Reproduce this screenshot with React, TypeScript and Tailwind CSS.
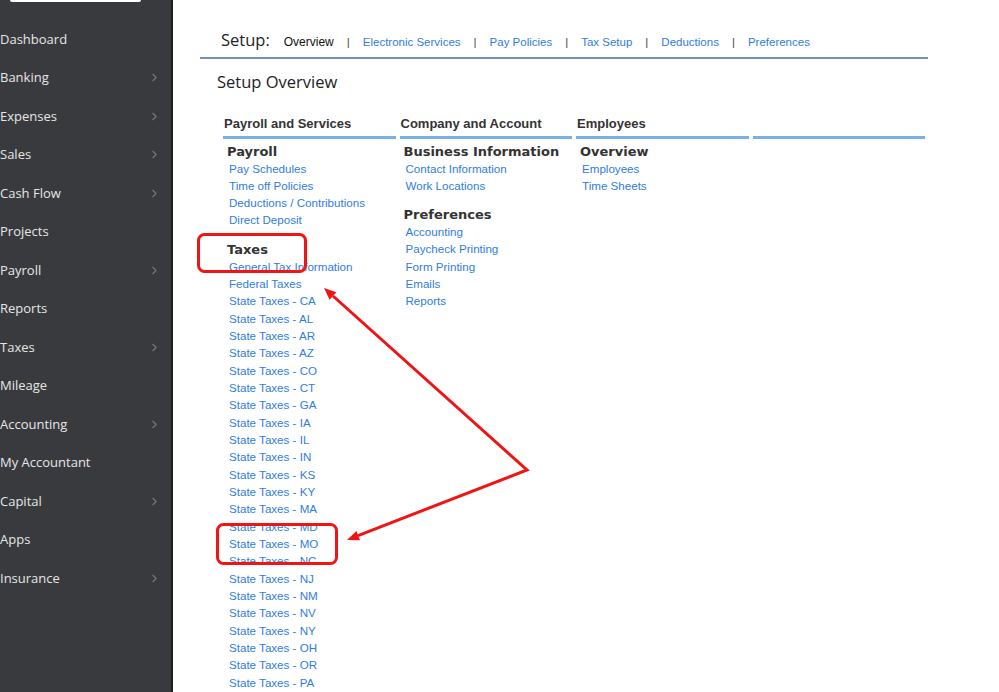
import { ChevronRight } from "lucide-react";

const navItems = [
  { label: "Dashboard", arrow: false },
  { label: "Banking", arrow: true },
  { label: "Expenses", arrow: true },
  { label: "Sales", arrow: true },
  { label: "Cash Flow", arrow: true },
  { label: "Projects", arrow: false },
  { label: "Payroll", arrow: true },
  { label: "Reports", arrow: false },
  { label: "Taxes", arrow: true },
  { label: "Mileage", arrow: false },
  { label: "Accounting", arrow: true },
  { label: "My Accountant", arrow: false },
  { label: "Capital", arrow: true },
  { label: "Apps", arrow: false },
  { label: "Insurance", arrow: true },
];

const tabs = ["Electronic Services", "Pay Policies", "Tax Setup", "Deductions", "Preferences"];

const states = [
  "CA", "AL", "AR", "AZ", "CO", "CT", "GA", "IA", "IL", "IN", "KS", "KY",
  "MA", "MD", "MO", "NC", "NJ", "NM", "NV", "NY", "OH", "OR", "PA",
];

type Group = { title: string; links: string[] };

const columns: { header: string; groups: Group[] }[] = [
  {
    header: "Payroll and Services",
    groups: [
      {
        title: "Payroll",
        links: ["Pay Schedules", "Time off Policies", "Deductions / Contributions", "Direct Deposit"],
      },
      {
        title: "Taxes",
        links: ["General Tax Information", "Federal Taxes", ...states.map((s) => `State Taxes - ${s}`)],
      },
    ],
  },
  {
    header: "Company and Account",
    groups: [
      { title: "Business Information", links: ["Contact Information", "Work Locations"] },
      {
        title: "Preferences",
        links: ["Accounting", "Paycheck Printing", "Form Printing", "Emails", "Reports"],
      },
    ],
  },
  {
    header: "Employees",
    groups: [{ title: "Overview", links: ["Employees", "Time Sheets"] }],
  },
  { header: "", groups: [] },
];

const Sidebar = () => (
  <aside className="w-[173px] shrink-0 h-full bg-[#393a3d] border-r-2 border-[#1e1f21] font-['Open_Sans',sans-serif]">
    <div className="ml-[10px] w-[131px] h-[2px] bg-white rounded-b-[2px]" />
    <ul className="mt-[18px]">
      {navItems.map((item) => (
        <li
          key={item.label}
          className="h-[38.5px] flex items-center justify-between pr-[10px] text-[13px] text-[#e6e6e6]"
        >
          <span>{item.label}</span>
          {item.arrow && <ChevronRight size={13} strokeWidth={2} className="text-[#77787b]" />}
        </li>
      ))}
    </ul>
  </aside>
);

const Annotations = () => (
  <svg className="absolute inset-0 pointer-events-none" width="999" height="692" viewBox="0 0 999 692">
    <g fill="none" stroke="#f01414" strokeWidth="3">
      <rect x="198.5" y="234.5" width="107" height="37" rx="6" />
      <rect x="217.5" y="524.5" width="119" height="39" rx="6" />
      <polyline points="333,296 527,470 358,535.6" strokeLinejoin="miter" />
    </g>
    <g fill="#f01414">
      <polygon points="324,288 336.3,292.3 329.6,299.7" />
      <polygon points="347,540 360,540.3 356.4,530.9" />
    </g>
  </svg>
);

export default function App() {
  return (
    <div className="relative w-[999px] h-[692px] overflow-hidden flex bg-white">
      <Sidebar />
      <main className="flex-1 pl-[27px] pt-[28px]">
        <div className="w-[728px] border-b-2 border-[#7292bb] flex items-baseline pl-[21px] pb-[4px] font-['Liberation_Sans',Arial,sans-serif] text-[11.5px]">
          <span className="font-['Open_Sans',sans-serif] text-[16.5px] text-[#222] mr-[14px]">Setup:</span>
          <span className="text-[12px] text-[#111]">Overview</span>
          {tabs.map((t) => (
            <span key={t} className="flex items-baseline">
              <span className="text-[#444] px-[13px]">|</span>
              <span className="text-[#2f7de1]">{t}</span>
            </span>
          ))}
        </div>

        <h1 className="mt-[11px] ml-[17px] font-['Open_Sans',sans-serif] text-[16.5px] text-[#222]">Setup Overview</h1>

        <div className="mt-[20px] ml-[23px] w-[702px] grid grid-cols-4 gap-x-[4px] items-start">
          {columns.map((col, i) => (
            <div key={i}>
              <div className="h-[17px] pl-[1px] font-['Liberation_Sans',Arial,sans-serif] font-bold text-[13px] leading-[17px] text-[#333]">
                {col.header}
              </div>
              <div className="mt-[4px] h-[3px] bg-[#7ab0e8]" />
              <div className="mt-[4px]">
                {col.groups.map((g, gi) => (
                  <div key={g.title} className={gi > 0 ? "mt-[12px]" : ""}>
                    <div className="pl-[4px] font-['DejaVu_Sans',sans-serif] font-bold text-[13px] leading-[17px] text-[#333]">
                      {g.title}
                    </div>
                    <ul>
                      {g.links.map((l) => (
                        <li
                          key={l}
                          className="pl-[6px] font-['Liberation_Sans',Arial,sans-serif] text-[11.6px] leading-[17.33px] text-[#2f7de1]"
                        >
                          {l}
                        </li>
                      ))}
                    </ul>
                  </div>
                ))}
              </div>
            </div>
          ))}
        </div>
      </main>
      <Annotations />
    </div>
  );
}
